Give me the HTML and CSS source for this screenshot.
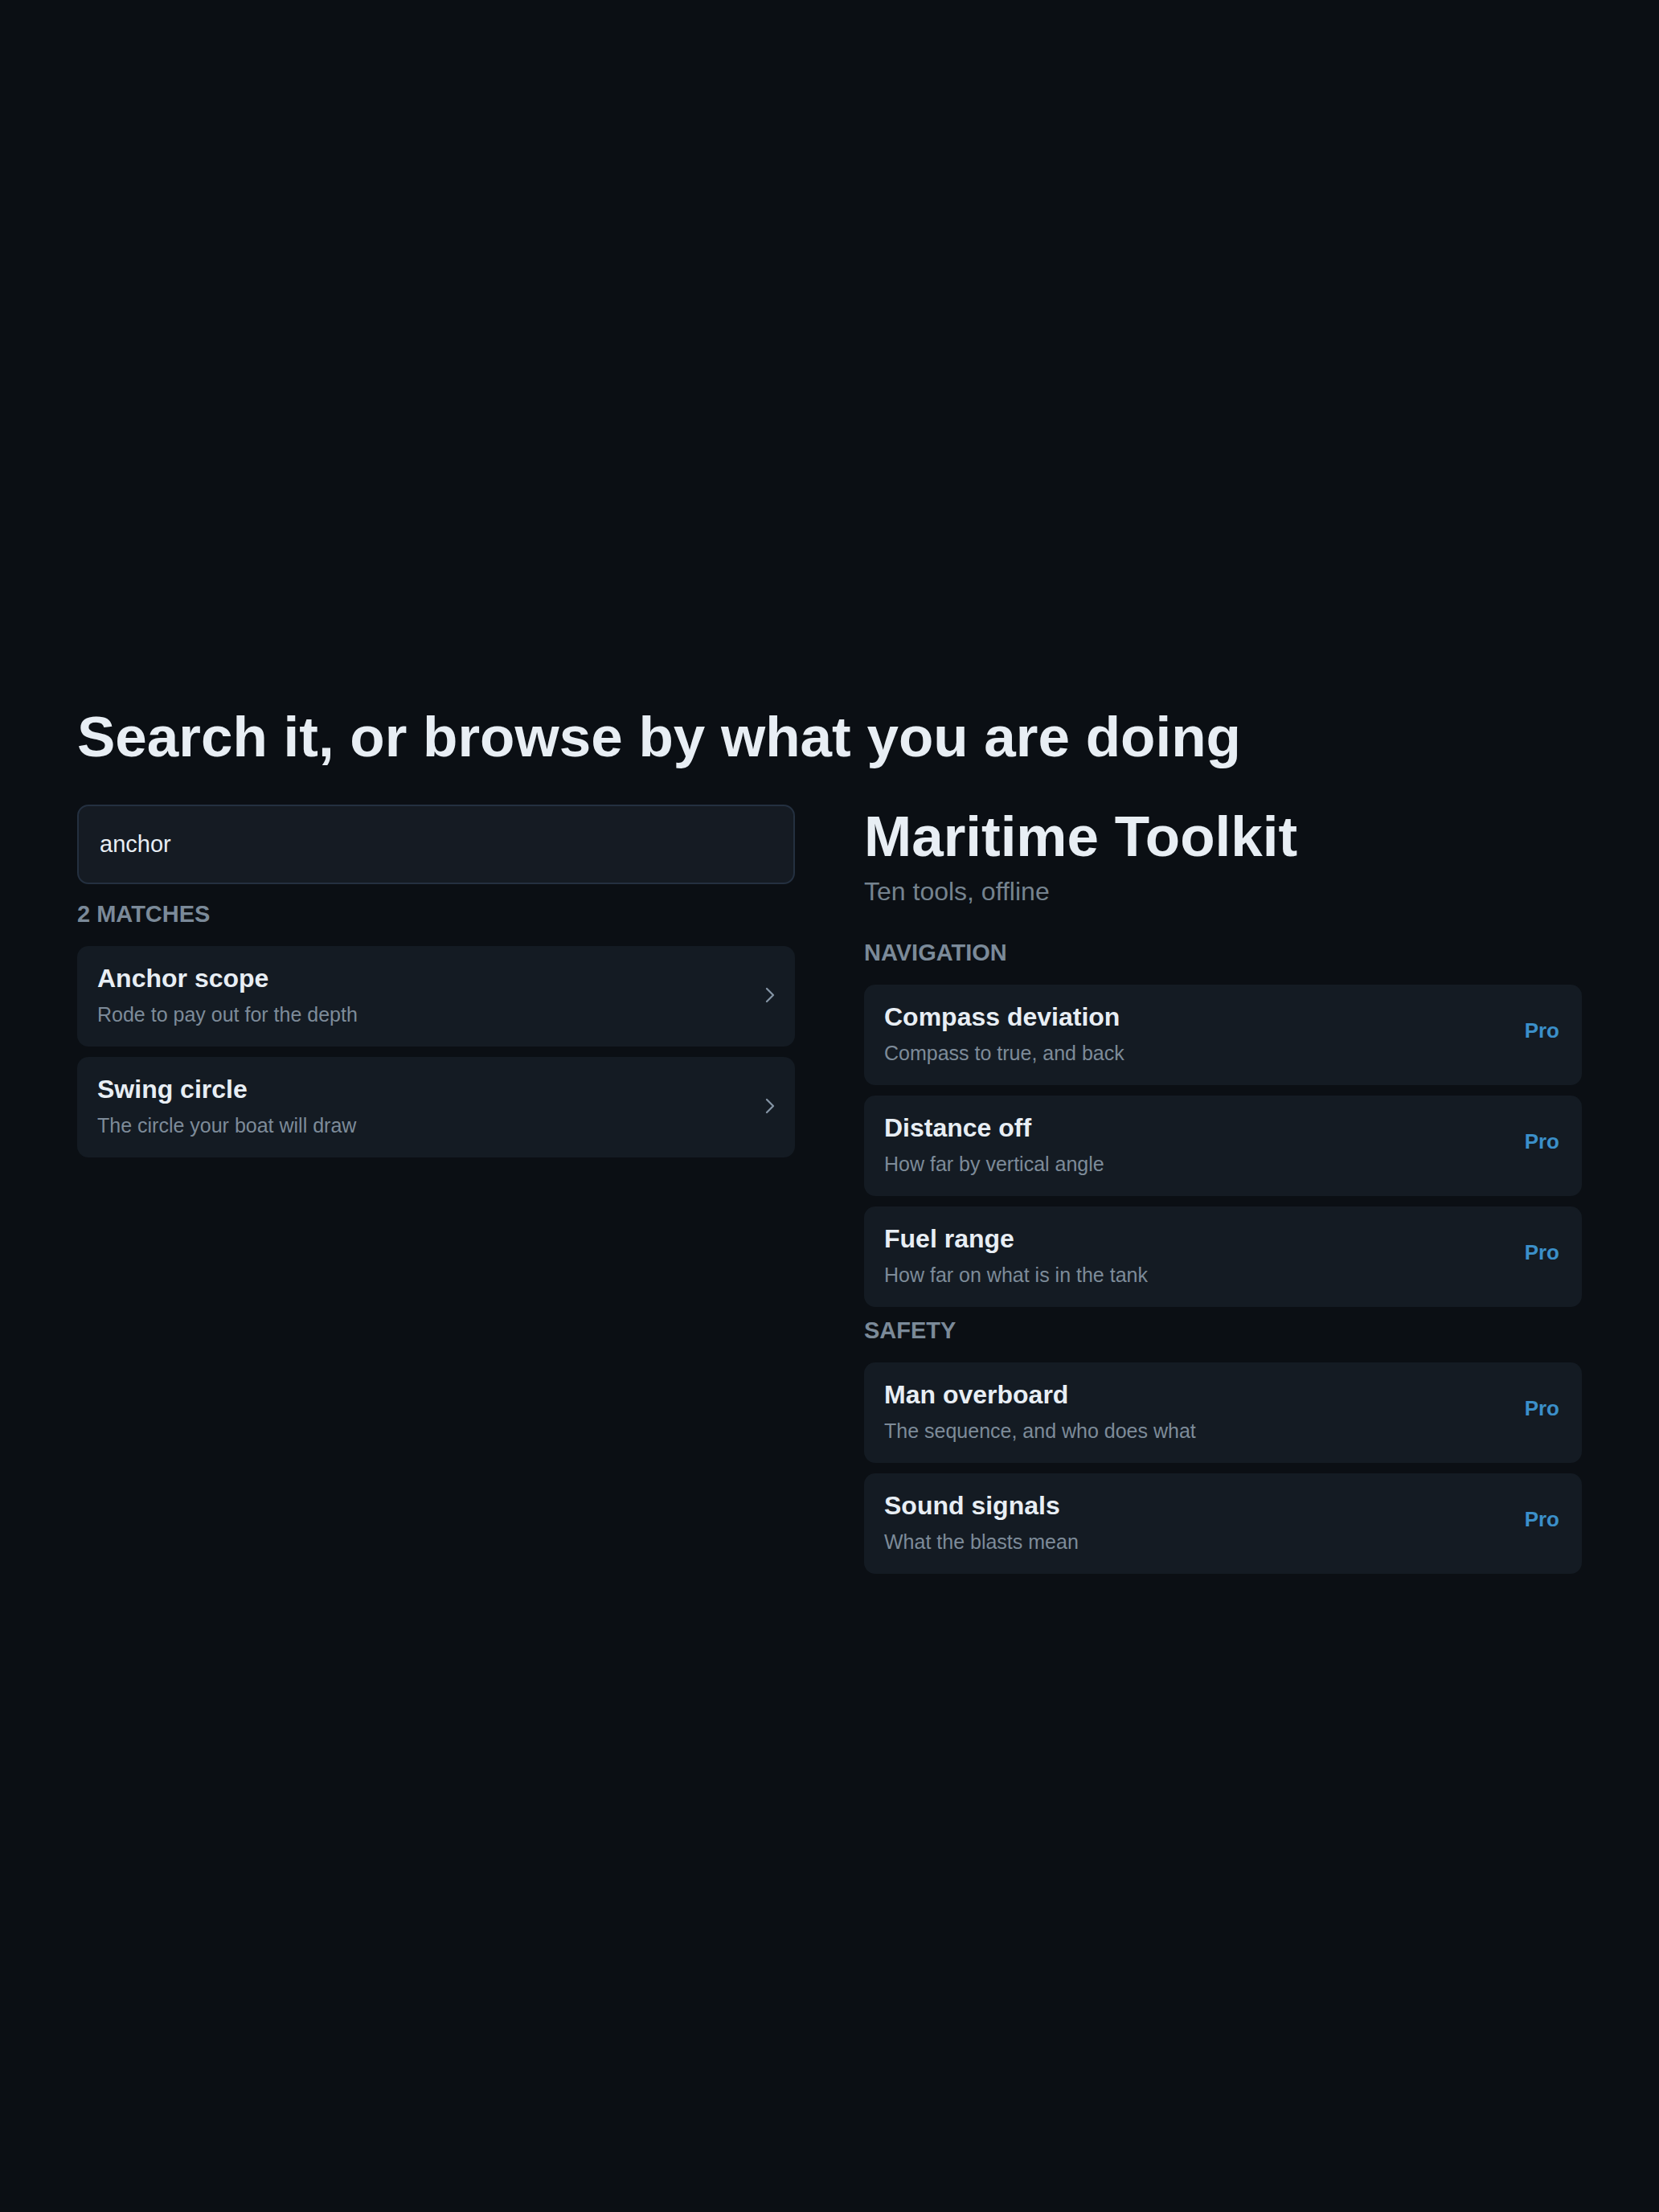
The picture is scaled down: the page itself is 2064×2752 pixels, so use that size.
FILE: index.html
```html
<!DOCTYPE html>
<html lang="en">
<head>
  <meta charset="UTF-8">
  <meta name="viewport" content="width=device-width, initial-scale=1.0">
  <title>Maritime Toolkit</title>
  <link rel="stylesheet" href="styles.css">
</head>
<body>
  <main class="page">
    <h1 class="page-title">Search it, or browse by what you are doing</h1>

    <div class="columns">
      <section class="search-col">
        <input type="text" class="search-input" value="anchor" aria-label="Search tools">
        <div class="group-label match-count">2 matches</div>
        <div class="tool-list">
          <a class="tool-card" href="#">
            <div class="tool-text">
              <div class="tool-name">Anchor scope</div>
              <div class="tool-desc">Rode to pay out for the depth</div>
            </div>
            <svg class="chevron" viewBox="0 0 12 20" width="12" height="20"><polyline points="2,2 10,10 2,18" /></svg>
          </a>
          <a class="tool-card" href="#">
            <div class="tool-text">
              <div class="tool-name">Swing circle</div>
              <div class="tool-desc">The circle your boat will draw</div>
            </div>
            <svg class="chevron" viewBox="0 0 12 20" width="12" height="20"><polyline points="2,2 10,10 2,18" /></svg>
          </a>
        </div>
      </section>

      <section class="browse-col">
        <h2 class="app-name">Maritime Toolkit</h2>
        <p class="app-tagline">Ten tools, offline</p>

        <div class="group-label first">Navigation</div>
        <div class="tool-list">
          <a class="tool-card" href="#">
            <div class="tool-text">
              <div class="tool-name">Compass deviation</div>
              <div class="tool-desc">Compass to true, and back</div>
            </div>
            <span class="pro-tag">Pro</span>
          </a>
          <a class="tool-card" href="#">
            <div class="tool-text">
              <div class="tool-name">Distance off</div>
              <div class="tool-desc">How far by vertical angle</div>
            </div>
            <span class="pro-tag">Pro</span>
          </a>
          <a class="tool-card" href="#">
            <div class="tool-text">
              <div class="tool-name">Fuel range</div>
              <div class="tool-desc">How far on what is in the tank</div>
            </div>
            <span class="pro-tag">Pro</span>
          </a>
        </div>

        <div class="group-label">Safety</div>
        <div class="tool-list">
          <a class="tool-card" href="#">
            <div class="tool-text">
              <div class="tool-name">Man overboard</div>
              <div class="tool-desc">The sequence, and who does what</div>
            </div>
            <span class="pro-tag">Pro</span>
          </a>
          <a class="tool-card" href="#">
            <div class="tool-text">
              <div class="tool-name">Sound signals</div>
              <div class="tool-desc">What the blasts mean</div>
            </div>
            <span class="pro-tag">Pro</span>
          </a>
        </div>
      </section>
    </div>
  </main>
</body>
</html>
```

FILE: styles.css
```css
html, body {
  margin: 0;
  background-color: #0b0f14;
}
body {
  font-family: "Liberation Sans", Arial, sans-serif;
  color: #e8eef4;
  min-height: 2752px;
}
.page {
  padding: 877px 96px 0;
}
.page-title {
  margin: 0 0 44px;
  font-size: 71px;
  line-height: 80px;
  font-weight: bold;
  color: #e8eef4;
}
.columns {
  display: grid;
  grid-template-columns: 1fr 1fr;
  column-gap: 86px;
  align-items: start;
}
.search-input {
  display: block;
  box-sizing: border-box;
  width: 100%;
  height: 99px;
  margin: 0;
  padding: 0 26px;
  background-color: #151b23;
  border: 2px solid #243040;
  border-radius: 14px;
  color: #e8eef4;
  font-family: inherit;
  font-size: 29px;
  outline: none;
}
.group-label {
  margin: 13px 0 24px;
  font-size: 29px;
  line-height: 32px;
  font-weight: bold;
  color: #7b8a99;
  text-transform: uppercase;
}
.match-count {
  margin-top: 21px;
}
.group-label.first {
  margin-top: 42px;
}
.tool-list {
  display: flex;
  flex-direction: column;
  gap: 13px;
}
.tool-card {
  display: flex;
  align-items: center;
  justify-content: space-between;
  min-height: 125px;
  box-sizing: border-box;
  padding: 22px 28px 25px 25px;
  background-color: #141b23;
  border-radius: 14px;
  text-decoration: none;
}
.tool-name {
  font-size: 32px;
  line-height: 37px;
  font-weight: bold;
  color: #e8eef4;
}
.tool-desc {
  margin-top: 11px;
  font-size: 25px;
  line-height: 30px;
  color: #7d8b99;
}
.chevron {
  flex: none;
  margin-right: -3px;
  fill: none;
  stroke: #8494a4;
  stroke-width: 2.3;
  stroke-linecap: round;
  stroke-linejoin: round;
}
.pro-tag {
  margin-bottom: 8px;
  font-size: 26px;
  font-weight: bold;
  color: #3b8fc9;
}
.app-name {
  margin: 0;
  font-size: 71px;
  line-height: 80px;
  font-weight: bold;
  color: #e8eef4;
}
.app-tagline {
  margin: 10px 0 0;
  font-size: 32px;
  line-height: 36px;
  color: #75838f;
}
```
